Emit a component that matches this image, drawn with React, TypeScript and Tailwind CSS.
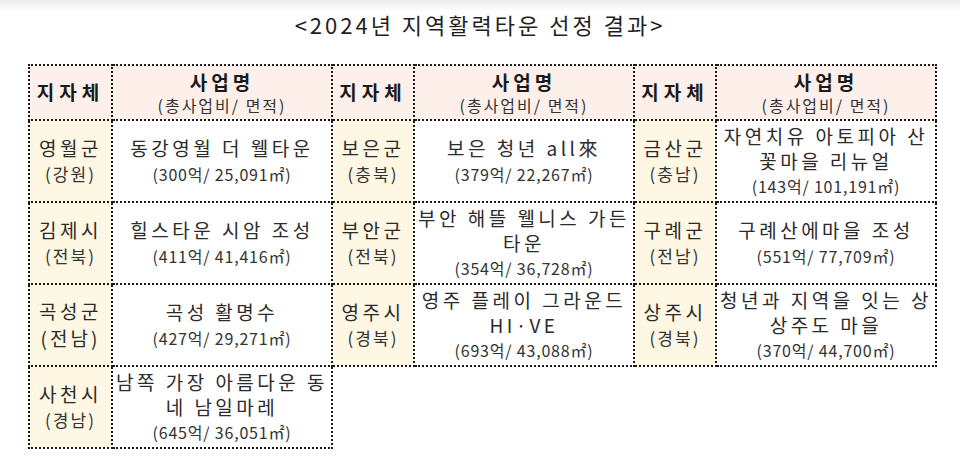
const FONT = { fontFamily: '"Noto Sans CJK KR", "Noto Sans", sans-serif' };

type Item = {
  region: string;
  province: string;
  name: string[];
  cost: string;
  big?: boolean;
};

const rows: Item[][] = [
  [
    { region: "영월군", province: "(강원)", name: ["동강영월 더 웰타운"], cost: "(300억/ 25,091㎡)" },
    { region: "보은군", province: "(충북)", name: ["보은 청년 all來"], cost: "(379억/ 22,267㎡)" },
    { region: "금산군", province: "(충남)", name: ["자연치유 아토피아 산", "꽃마을 리뉴얼"], cost: "(143억/ 101,191㎡)" },
  ],
  [
    { region: "김제시", province: "(전북)", name: ["힐스타운 시암 조성"], cost: "(411억/ 41,416㎡)" },
    { region: "부안군", province: "(전북)", name: ["부안 해뜰 웰니스 가든", "타운"], cost: "(354억/ 36,728㎡)" },
    { region: "구례군", province: "(전남)", name: ["구례산에마을 조성"], cost: "(551억/ 77,709㎡)" },
  ],
  [
    { region: "곡성군", province: "(전남)", name: ["곡성 활명수"], cost: "(427억/ 29,271㎡)", big: true },
    { region: "영주시", province: "(경북)", name: ["영주 플레이 그라운드", "HI·VE"], cost: "(693억/ 43,088㎡)" },
    { region: "상주시", province: "(경북)", name: ["청년과 지역을 잇는 상", "상주도 마을"], cost: "(370억/ 44,700㎡)" },
  ],
  [
    { region: "사천시", province: "(경남)", name: ["남쪽 가장 아름다운 동", "네 남일마레"], cost: "(645억/ 36,051㎡)" },
  ],
];

const cell = "border-2 border-dotted border-[#1a1a1a] p-0 text-center align-middle";

function RegionCell({ item }: { item: Item }) {
  return (
    <td className={`${cell} bg-[#fdf7e4]`}>
      <div className="text-[19px] leading-[26px] tracking-[3.5px] text-[#2b2b2b]">{item.region}</div>
      <div
        className={
          item.big
            ? "text-[19px] leading-[28px] tracking-[3px] text-[#2b2b2b]"
            : "text-[17px] leading-[26px] tracking-[2px] text-[#333]"
        }
      >
        {item.province}
      </div>
    </td>
  );
}

function NameCell({ item }: { item: Item }) {
  const multi = item.name.length > 1;
  return (
    <td className={`${cell} bg-white`}>
      {item.name.map((line) => (
        <div
          key={line}
          className={`whitespace-nowrap text-[19px] tracking-[3.5px] text-[#2b2b2b] ${
            multi ? "leading-[25px]" : "leading-[27px]"
          }`}
        >
          {line}
        </div>
      ))}
      <div className="whitespace-nowrap text-[16px] leading-[27px] tracking-[0.8px] text-[#333]">{item.cost}</div>
    </td>
  );
}

function HeaderPair() {
  return (
    <>
      <th className={`${cell} bg-[#fdf0ea] text-[19px] font-bold tracking-[5px] text-[#1a1a1a]`}>지자체</th>
      <th className={`${cell} bg-[#fdf0ea] font-normal`}>
        <div className="text-[19px] font-bold leading-[24px] tracking-[4px] text-[#1a1a1a]">사업명</div>
        <div className="text-[16px] leading-[22px] tracking-[2px] text-[#333]">(총사업비/ 면적)</div>
      </th>
    </>
  );
}

export default function App() {
  return (
    <div className="h-[466px] w-[960px] bg-white" style={FONT}>
      <div className="h-[12px] bg-gradient-to-b from-[#ececec] to-white" />
      <h1 className="text-center text-[22px] leading-[24px] tracking-[3px] text-[#1f1f1f]">
        &lt;2024년 지역활력타운 선정 결과&gt;
      </h1>
      <div className="pl-[28px] pt-[28px]">
        <table className="w-[907px] table-fixed border-collapse">
          <colgroup>
            <col className="w-[83px]" />
            <col className="w-[220px]" />
            <col className="w-[82px]" />
            <col className="w-[220px]" />
            <col className="w-[82px]" />
            <col className="w-[220px]" />
          </colgroup>
          <thead>
            <tr className="h-[55px]">
              <HeaderPair />
              <HeaderPair />
              <HeaderPair />
            </tr>
          </thead>
          <tbody>
            {rows.map((row, i) => (
              <tr key={i} className="h-[82px]">
                {row.map((item) => (
                  <>
                    <RegionCell key={item.region + "r"} item={item} />
                    <NameCell key={item.region + "n"} item={item} />
                  </>
                ))}
              </tr>
            ))}
          </tbody>
        </table>
      </div>
    </div>
  );
}
